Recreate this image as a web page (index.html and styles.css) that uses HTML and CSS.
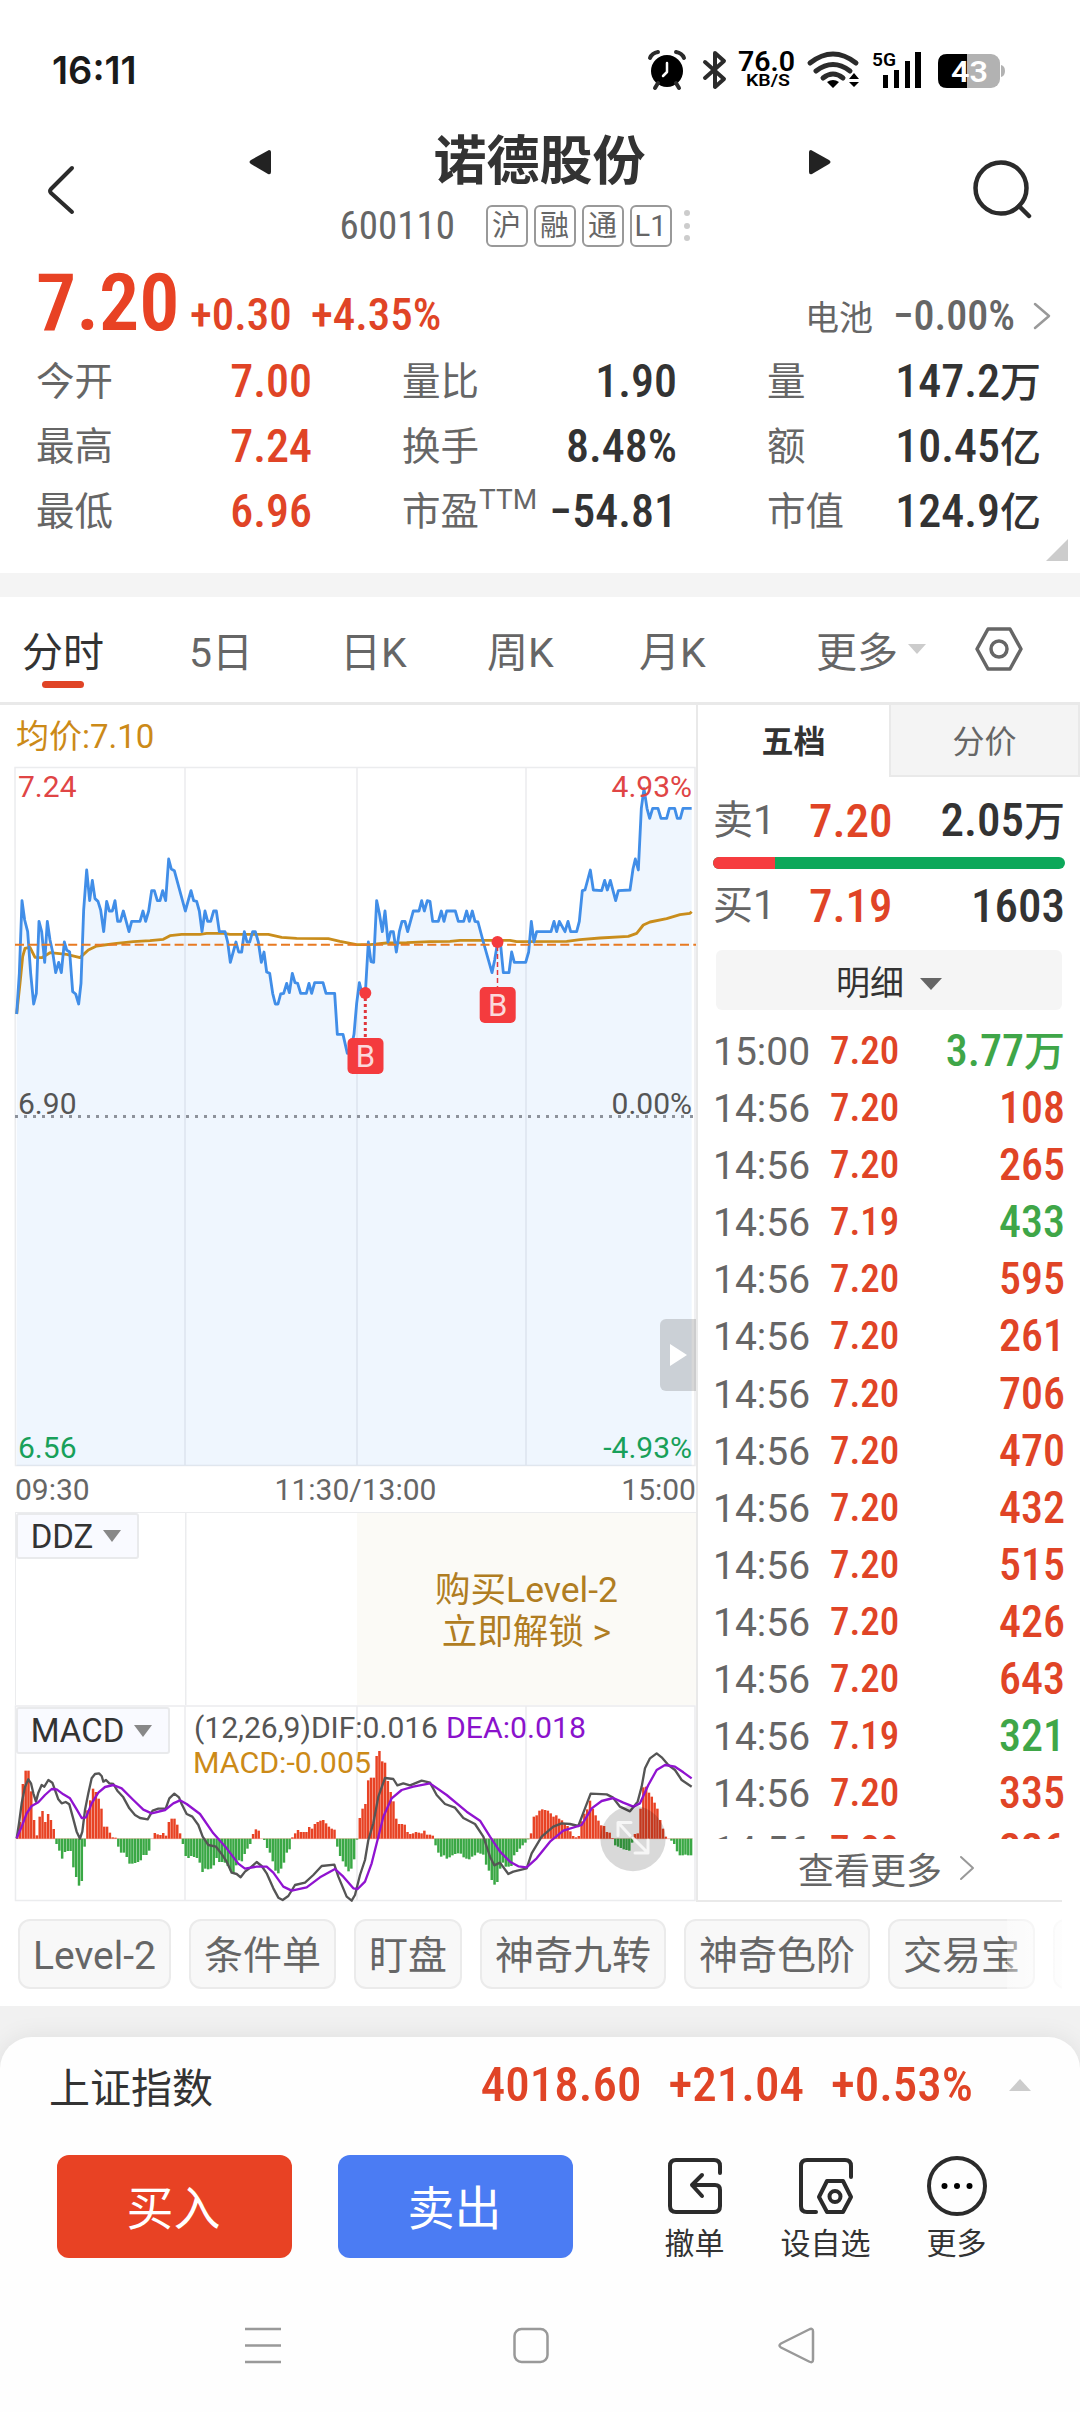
FILE: index.html
```html
<!DOCTYPE html>
<html lang="zh-CN">
<head>
    <meta charset="UTF-8">
    <meta name="viewport" content="width=device-width, initial-scale=1.0">
    <title>诺德股份 600110</title>
    <link rel="stylesheet" href="styles.css">
</head>
<body>
    <div class="status-bar">
        <span class="clock">16:11</span>
        <svg class="status-icons" viewBox="640 40 370 60" width="370" height="60">
            <!-- alarm -->
            <circle cx="667" cy="71" r="16"/>
            <path d="M650 58q2-5 8-6M684 58q-2-5-8-6M658 83l-3 5M676 83l3 5" class="ln" stroke-width="4"/>
            <path d="M667 63v9l-4 4" class="ln-white" stroke-width="2.5"/>
            <!-- bluetooth -->
            <path d="M705 62l19 17-9 8V53l9 8-19 17" class="ln" stroke-width="4"/>
            <text x="738" y="71" class="speed" textLength="57" lengthAdjust="spacingAndGlyphs">76.0</text>
            <text x="746" y="86" class="unit" textLength="44" lengthAdjust="spacingAndGlyphs">KB/S</text>
            <!-- wifi -->
            <path d="M810 63q23-18 46 0M816 71q17-13 34 0M823 78q10-8 20 0" class="ln" stroke-width="5"/>
            <path d="M827 82q6-4 12 0l-6 6zM849 79l5-6 5 6zM849 82h10l-5 5z"/>
            <text x="872" y="66" class="net" textLength="24" lengthAdjust="spacingAndGlyphs">5G</text>
            <path d="M883 75h5v13h-5zM894 70h5v18h-5zM905 61h5v27h-5zM915 52h6v36h-6z"/>
            <!-- battery -->
            <rect x="938" y="54" width="62" height="34" rx="9" fill="#b2b2b2"/>
            <path d="M1001 65q4 1 4 6t-4 6z" fill="#b2b2b2"/>
            <path d="M947 54h20v34h-20q-9 0-9-9v-16q0-9 9-9z" fill="#000"/>
            <text x="951" y="82" class="level" textLength="37" lengthAdjust="spacingAndGlyphs">43</text>
        </svg>
    </div>

    <header class="header">
        <svg class="back" viewBox="0 0 30 50" width="30" height="50"><path d="M25 3L4 24q-2 2 0 4l21 19" class="ln" stroke-width="4"/></svg>
        <div class="stock">
            <div class="stock-name">
                <svg viewBox="0 0 22 26" width="22" height="26"><path d="M20 1q2 0 2 2v20q0 3-3 2L2 15q-3-2 0-4z"/></svg>
                <h1>诺德股份</h1>
                <svg viewBox="0 0 22 26" width="22" height="26"><path d="M2 1q-2 0-2 2v20q0 3 3 2L20 15q3-2 0-4z"/></svg>
            </div>
            <div class="stock-code">
                <span class="num code">600110</span>
                <span class="badge">沪</span><span class="badge">融</span><span class="badge">通</span><span class="badge">L1</span>
                <svg viewBox="0 0 6 32" width="6" height="32" fill="#ccc"><circle cx="3" cy="3" r="3"/><circle cx="3" cy="16" r="3"/><circle cx="3" cy="28" r="3"/></svg>
            </div>
        </div>
        <svg class="search" viewBox="0 0 60 60" width="60" height="60"><circle cx="28" cy="29" r="25.5" class="ln" stroke-width="4.5"/><path d="M46 47l10 10" class="ln" stroke-width="4.5"/></svg>
    </header>

    <section class="quote">
        <div class="price-row">
            <span class="num price">7.20</span>
            <span class="num change">+0.30</span>
            <span class="num change">+4.35%</span>
            <span class="sector">电池</span>
            <span class="num sector-change">−0.00%</span>
            <svg viewBox="0 0 18 28" width="18" height="28"><path d="M2 2l14 12L2 26" class="ln-gray" stroke-width="2.5"/></svg>
        </div>
        <div class="stats">
            <div class="stat"><span>今开</span><b class="num red">7.00</b></div>
            <div class="stat"><span>量比</span><b class="num">1.90</b></div>
            <div class="stat"><span>量</span><b class="num">147.2<em>万</em></b></div>
            <div class="stat"><span>最高</span><b class="num red">7.24</b></div>
            <div class="stat"><span>换手</span><b class="num">8.48%</b></div>
            <div class="stat"><span>额</span><b class="num">10.45<em>亿</em></b></div>
            <div class="stat"><span>最低</span><b class="num red">6.96</b></div>
            <div class="stat"><span>市盈<i>TTM</i></span><b class="num">−54.81</b></div>
            <div class="stat"><span>市值</span><b class="num">124.9<em>亿</em></b></div>
        </div>
        <div class="corner"></div>
    </section>

    <nav class="tabs">
        <span class="tab active">分时</span>
        <span class="tab">5日</span>
        <span class="tab">日K</span>
        <span class="tab">周K</span>
        <span class="tab">月K</span>
        <span class="tab more">更多<svg viewBox="0 0 18 10" width="18" height="10"><path d="M0 0h18l-9 10z" fill="#ccc"/></svg></span>
        <svg viewBox="0 0 48 44" width="48" height="44"><path d="M13 2h22l11 20-11 20H13L2 22z" class="ln-dark" stroke-width="3.5"/><circle cx="24" cy="22" r="8" class="ln-dark" stroke-width="3.5"/></svg>
    </nav>

    <main class="board">
        <div class="charts">
            <div class="average">均价:7.10</div>
            <svg class="price-chart" viewBox="0 766 696 701" width="696" height="701">
                <g class="grid">
                    <path d="M185 767v699M357 767v699M526 767v699"/>
                    <path d="M15 767.5h680v698H15.5z" stroke-width="2"/>
                </g>
                <g transform="translate(0 760) scale(.33333)">
                    <path class="area" id="area"/>
                    <path class="avg-line" d="M50 762L60 670L68 590L75 565L90 562L105 592L125 593L150 578L200 583L240 593L265 570L290 558L350 550L400 545L450 542L490 538L510 527L545 523L600 523L620 520L670 520L690 523L805 523L845 532L890 535L985 536L1020 544L1070 554L1110 554L1160 549L1220 548L1290 545L1350 544L1380 541L1530 541L1550 545L1700 544L1740 539L1800 534L1885 529L1910 520L1930 495L1950 486L2000 476L2040 464L2070 460L2075 455"/>
                    <path class="price-line" id="price"/>
                </g>
                <path d="M15 944.7h681" stroke="#e87a22" stroke-width="2" stroke-dasharray="9 4.3" fill="none"/>
                <path d="M15 1116.5h680" stroke="#8d929b" stroke-width="3" stroke-dasharray="3 6" fill="none"/>
                <g class="axis">
                    <text x="18" y="797" fill="#e04545">7.24</text>
                    <text x="692" y="797" fill="#e04545" text-anchor="end">4.93%</text>
                    <text x="18" y="1114" fill="#555">6.90</text>
                    <text x="692" y="1114" fill="#555" text-anchor="end">0.00%</text>
                    <text x="18" y="1458" fill="#18a05a">6.56</text>
                    <text x="692" y="1458" fill="#18a05a" text-anchor="end">-4.93%</text>
                </g>
                <g class="mark">
                    <path d="M365.3 998v40" stroke-width="3" stroke-dasharray="3 3"/>
                    <path d="M497.5 946v42" stroke-width="1.5" stroke-dasharray="5 3"/>
                    <circle cx="365.3" cy="993" r="6"/><circle cx="497.5" cy="942" r="6"/>
                    <rect x="347.5" y="1038" width="36" height="36" rx="5"/><rect x="479.7" y="987" width="36" height="36" rx="5"/>
                    <text x="365.5" y="1067">B</text><text x="497.7" y="1016">B</text>
                </g>
            </svg>
            <div class="times"><span>09:30</span><span>11:30/13:00</span><span>15:00</span></div>
            <div class="ddz">
                <span class="indicator">DDZ<i></i></span>
                <div class="unlock">购买Level-2<br>立即解锁 &gt;</div>
            </div>
            <div class="macd">
                <svg viewBox="0 1705 696 198" width="696" height="198">
                    <g class="grid">
                        <path d="M185 1706v194M357 1706v194M526 1706v194"/>
                        <path d="M15.5 1706h679.500v194.500H15.500z" stroke-width="2"/>
                    </g>
                    <g transform="translate(0 1690) scale(.33333)">
                        <path d="M50 446H2078" stroke="#e8a090" stroke-width="2"/>
                        <g id="bars"></g>
                        <path class="dif" d="M50 445L57 400L65 340L75 290L85 268L93 280L100 310L108 335L115 308L125 285L133 290L145 270L157 278L165 300L175 328L185 340L197 336L208 343L218 380L230 425L240 446L247 425L255 360L265 310L275 265L285 252L297 250L305 258L310 275L318 270L328 280L340 282L352 302L370 322L388 355L405 375L420 384L443 388L458 362L475 356L497 356L508 325L523 311L537 322L545 342L560 372L577 380L595 405L608 440L625 465L648 470L665 492L680 515L695 548L710 552L722 562L735 545L752 532L770 516L785 528L800 550L820 595L835 623L848 630L865 618L885 585L915 578L940 555L965 528L1003 524L1015 560L1040 620L1055 632L1065 615L1080 555L1095 510L1105 450L1120 400L1135 320L1155 264L1180 267L1192 286L1210 280L1230 286L1265 272L1290 278L1310 315L1335 342L1365 353L1390 384L1425 402L1450 440L1470 500L1483 526L1500 518L1525 552L1540 545L1580 535L1595 490L1625 440L1660 410L1685 400L1710 402L1735 408L1755 355L1772 311L1820 313L1838 322L1860 350L1890 364L1913 335L1925 290L1935 235L1950 205L1970 190L1985 202L2005 225L2025 240L2045 270L2075 290"/>
                        <path class="dea" d="M50 445L65 410L80 370L95 348L115 337L135 315L155 297L170 298L190 313L210 325L230 358L245 384L258 382L275 340L295 308L315 291L340 285L365 295L400 330L430 359L455 370L495 360L520 340L540 331L560 342L600 372L640 430L680 475L715 521L735 536L770 530L800 530L820 548L850 590L875 602L920 592L960 562L1005 537L1030 560L1060 595L1073 597L1095 575L1115 520L1135 440L1150 380L1175 325L1205 300L1240 290L1290 280L1340 315L1400 365L1440 392L1470 440L1500 485L1530 515L1555 529L1580 532L1610 505L1650 455L1690 422L1745 405L1775 355L1805 333L1840 324L1870 338L1900 350L1920 340L1945 285L1970 240L1995 225L2025 230L2050 247L2075 265"/>
                    </g>
                    <g class="axis">
                        <text x="194" y="1738" fill="#555" textLength="244" lengthAdjust="spacingAndGlyphs">(12,26,9)DIF:0.016</text>
                        <text x="446" y="1738" fill="#8a12cc" textLength="140" lengthAdjust="spacingAndGlyphs">DEA:0.018</text>
                        <text x="193" y="1773" fill="#cc8a18" textLength="178" lengthAdjust="spacingAndGlyphs">MACD:-0.005</text>
                    </g>
                    <circle cx="633" cy="1838.500" r="32.700" fill="#000" fill-opacity=".15"/>
                    <path d="M631 1822.500h-13v13M618 1822.500l12 13M635 1853h13v-13M648 1853l-15-15" class="ln-white" stroke-width="3" stroke-opacity=".75"/>
                </svg>
                <span class="indicator wide">MACD<i></i></span>
            </div>
            <div class="slide-handle"></div>
        </div>

        <aside class="orders">
            <div class="order-tabs"><span class="current">五档</span><span>分价</span></div>
            <div class="level1"><span>卖1</span><b class="num red">7.20</b><b class="num">2.05<em>万</em></b></div>
            <div class="ratio"><i style="width: 17.6%"></i></div>
            <div class="level1 buy"><span>买1</span><b class="num red">7.19</b><b class="num">1603</b></div>
            <div class="detail">明细<i></i></div>
            <div class="ticks" id="ticks"></div>
            <div class="see-more">查看更多<svg viewBox="0 0 16 26" width="16" height="26"><path d="M2 2l12 11L2 24" class="ln-gray" stroke-width="2"/></svg></div>
        </aside>
    </main>

    <div class="chips">
        <span>Level-2</span><span>条件单</span><span>盯盘</span><span>神奇九转</span><span>神奇色阶</span><span>交易宝</span><span></span>
    </div>

    <footer class="bottom">
        <div class="sheet">
            <div class="index">
                <span class="index-name">上证指数</span>
                <span class="num">4018.60</span>
                <span class="num">+21.04</span>
                <span class="num">+0.53%</span>
                <i></i>
            </div>
            <div class="actions">
                <button class="buy-btn">买入</button>
                <button class="sell-btn">卖出</button>
                <div class="action">
                    <svg viewBox="0 0 60 60" width="60" height="60"><path d="M55 17V10q0-6-6-6H11Q5 4 5 10v40q0 6 6 6h38q6 0 6-6V34q0-5-5-5H27M37 19L27 29l10 11" class="ln" stroke-width="4"/></svg>
                    撤单
                </div>
                <div class="action">
                    <svg viewBox="0 0 60 60" width="60" height="60"><path d="M55 21V10q0-6-6-6H11Q5 4 5 10v40q0 6 6 6h9M31 25h16l8 16-8 15H31l-8-15z" class="ln" stroke-width="4"/><circle cx="39" cy="40.500" r="5.500" class="ln" stroke-width="4"/></svg>
                    设自选
                </div>
                <div class="action">
                    <svg viewBox="0 0 60 60" width="60" height="60"><circle cx="30" cy="30" r="28" class="ln" stroke-width="4"/><circle cx="17.500" cy="30" r="3"/><circle cx="30" cy="30" r="3"/><circle cx="42.500" cy="30" r="3"/></svg>
                    更多
                </div>
            </div>
            <svg class="sys-nav" viewBox="0 0 1080 40" width="1080" height="40">
                <path d="M245 4h36M245 20.500h36M245 37h36"/>
                <rect x="514.500" y="4" width="33" height="33" rx="7"/>
                <path d="M781 18.500L809 4.500q4-2 4 2v28q0 4-4 2L781 22.500q-3-2 0-4z"/>
            </svg>
        </div>
    </footer>
    <script src="script.js"></script>
</body>
</html>
```
FILE: styles.css
```css
* {
    box-sizing: border-box;
}
body {
    margin: 0;
    width: 1080px;
    height: 2412px;
    overflow: hidden;
    background-color: #fff;
    color: #333;
    font-family: Roboto, "Noto Sans CJK SC", sans-serif;
}
svg {
    display: block;
    flex: none;
}
i, em {
    font-style: normal;
}
.ln, .ln-white, .ln-gray, .ln-dark {
    fill: none;
    stroke: #2b2b2b;
    stroke-linecap: round;
    stroke-linejoin: round;
}
.ln-white {
    stroke: #fff;
}
.ln-gray {
    stroke: #999;
}
.ln-dark {
    stroke: #666;
}
.num {
    font-stretch: 80%;
    font-weight: 550;
}
.num em {
    font-size: 41px;
    font-weight: 500;
}
.red {
    color: #e04426;
}

/* status bar */
.status-bar {
    display: flex;
    justify-content: space-between;
    height: 100px;
    padding: 40px 70px 0 52px;
}
.clock {
    font: 600 38px/60px Inter, sans-serif;
    color: #1a1a1a;
}
.status-icons text {
    font-family: Roboto, sans-serif;
    font-weight: 600;
}
.status-icons .speed {
    font-size: 27px;
}
.status-icons .unit {
    font-size: 16px;
}
.status-icons .net {
    font-size: 19px;
}
.status-icons .level {
    font-size: 30px;
    fill: #fff;
}

/* header */
.header {
    display: flex;
    height: 160px;
    padding: 0 47px;
    justify-content: space-between;
}
.back {
    margin-top: 65px;
}
.search {
    margin-top: 59px;
}
.stock {
    width: 582px;
    margin-left: 29px;
}
.stock-name {
    display: flex;
    align-items: center;
    justify-content: space-between;
    height: 100px;
    padding-top: 23px;
}
.stock-name svg {
    fill: #222;
}
h1 {
    margin: 0;
    font-size: 53px;
    line-height: 76px;
    font-weight: 700;
}
.stock-code {
    display: flex;
    align-items: center;
    gap: 6px;
    padding-left: 91px;
    height: 52px;
    color: #666;
}
.stock-code .code {
    width: 140px;
    font-size: 39px;
    font-weight: 400;
    font-stretch: 85%;
}
.badge {
    width: 42px;
    height: 42px;
    border: 2px solid #999;
    border-radius: 6px;
    font-size: 29px;
    line-height: 38px;
    text-align: center;
}
.stock-code svg {
    margin-left: 6px;
}

/* quote */
.quote {
    position: relative;
    height: 337px;
    padding: 0 36px;
    border-bottom: 24px solid #f4f4f4;
}
.price-row {
    display: flex;
    align-items: baseline;
    height: 89px;
    line-height: 86px;
}
.price {
    width: 154px;
    font-size: 80px;
    font-stretch: 75%;
    font-weight: 600;
    color: #e84224;
}
.change {
    width: 121px;
    font-size: 45px;
    font-weight: 500;
    color: #e04426;
}
.sector {
    margin-left: auto;
    font-size: 34px;
    color: #666;
}
.sector-change {
    margin: 0 18px 0 20px;
    font-size: 42px;
    font-weight: 500;
    color: #666;
}
.price-row svg {
    margin-right: -7px;
}
.stats {
    display: grid;
    grid-template-columns: 276px 275px 274px;
    column-gap: 90px;
    grid-auto-rows: 65px;
}
.stat {
    display: flex;
    justify-content: space-between;
    font-size: 38.5px;
    line-height: 65px;
    color: #666;
    white-space: nowrap;
}
.stat .num {
    font-size: 46px;
    color: #333;
}
.stat .red {
    color: #e04426;
}
.stat i {
    font-size: 28px;
    position: relative;
    top: -16px;
}
.corner {
    position: absolute;
    right: 12px;
    bottom: 12px;
    border-left: 22px solid transparent;
    border-bottom: 22px solid #ccc;
}

/* tabs */
.tabs {
    display: grid;
    grid-template-columns: 167px 151px 147px 152px 177px 159px 48px;
    align-items: center;
    height: 108px;
    padding: 0 0 2px 22px;
    border-bottom: 3px solid #e9e9e9;
    font-size: 41px;
    color: #666;
}
.tab {
    position: relative;
}
.active {
    color: #333;
}
.active::after {
    content: "";
    position: absolute;
    left: 20px;
    bottom: -9px;
    width: 42px;
    height: 7px;
    border-radius: 4px;
    background-color: #e04426;
}
.more {
    display: flex;
    align-items: center;
    gap: 10px;
}

/* charts */
.board {
    display: flex;
    height: 1197px;
}
.charts {
    position: relative;
    width: 698px;
    border-right: 2px solid #e9e9e9;
}
.average {
    height: 61px;
    padding-left: 16px;
    font-size: 33px;
    line-height: 63px;
    color: #cc8a18;
}
.grid path {
    fill: none;
    stroke: #ebecee;
    stroke-width: 1.5;
}
.area {
    fill: #2f86ee;
    fill-opacity: .08;
}
.price-line, .avg-line, .dif, .dea {
    fill: none;
    stroke: #418ee8;
    stroke-width: 8.5;
    stroke-linejoin: round;
}
.avg-line {
    stroke: #c98d1c;
}
.dif {
    stroke: #555;
    stroke-width: 7;
}
.dea {
    stroke: #9013d0;
    stroke-width: 7;
}
.axis text {
    font-size: 30px;
}
.mark {
    fill: #f43b3e;
}
.mark path {
    stroke: #e0363c;
}
.mark text {
    fill: #fbd9dc;
    font-size: 31px;
    text-anchor: middle;
}
.times {
    display: flex;
    justify-content: space-between;
    height: 45px;
    padding-left: 15px;
    font-size: 30px;
    line-height: 46px;
    color: #666;
}
.ddz {
    display: flex;
    justify-content: space-between;
    height: 193px;
    margin-left: 15px;
    border: 2px solid #ebecee;
    border-width: 1px 0 0 1px;
    background: linear-gradient(#ebecee, #ebecee) 169px 0 / 1.5px 100% no-repeat;
}
.unlock {
    width: 339px;
    padding-top: 56px;
    text-align: center;
    font-size: 35.5px;
    line-height: 42px;
    color: #b07d22;
    background-color: #fbfaf6;
}
.indicator {
    display: flex;
    align-items: center;
    justify-content: center;
    gap: 10px;
    width: 123px;
    height: 46px;
    border: 2px solid #e9eaec;
    border-radius: 3px;
    background-color: #f9faff;
    font-size: 33px;
    padding-right: 3px;
}
.indicator i {
    border: 9px solid transparent;
    border-top: 12px solid #888;
    border-bottom: 0;
}
.macd {
    position: relative;
}
.wide {
    position: absolute;
    left: 16px;
    top: 2px;
    width: 154px;
    height: 47px;
}
.slide-handle {
    position: absolute;
    right: 0;
    top: 614px;
    width: 36px;
    height: 72px;
    border-radius: 6px 0 0 6px;
    background-color: rgba(110, 110, 110, .28);
}
.slide-handle::after {
    content: "";
    position: absolute;
    left: 10px;
    top: 25px;
    border: 11px solid transparent;
    border-left: 17px solid #fff;
    border-right: 0;
}

/* orders */
.orders {
    width: 364px;
    padding-left: 15px;
    border-bottom: 2px solid #e9e9e9;
}
.order-tabs {
    display: flex;
    width: 382px;
    margin-left: -15px;
    font-size: 32px;
    line-height: 74px;
    text-align: center;
    color: #666;
}
.order-tabs span {
    width: 191px;
    height: 72px;
    border: 2px solid #e9e9e9;
    border-top: 0;
    background-color: #f4f4f4;
}
.order-tabs .current {
    border: 0;
    background-color: #fff;
    font-weight: 700;
    color: #333;
}
.level1 {
    display: grid;
    grid-template-columns: 96px 90px 1fr;
    height: 80px;
    width: 352px;
    align-items: center;
    padding-top: 8px;
    font-size: 40px;
    line-height: 60px;
    color: #666;
    white-space: nowrap;
}
.level1 .num {
    font-size: 47px;
    color: #333;
}
.level1 .num:last-child {
    text-align: right;
}
.level1 .red {
    color: #e04426;
}
.buy {
    height: 81px;
    padding: 0 0 8px;
}
.ratio {
    width: 352px;
    height: 12px;
    border-radius: 6px;
    background-color: #0ca85a;
    overflow: hidden;
}
.ratio i {
    display: block;
    height: 12px;
    background-color: #f63c3f;
}
.detail {
    display: flex;
    align-items: center;
    justify-content: center;
    gap: 16px;
    width: 346px;
    height: 60px;
    margin-left: 3px;
    border-radius: 6px;
    background-color: #f5f5f5;
    font-size: 34px;
}
.detail i {
    margin-top: 8px;
    border: 11px solid transparent;
    border-top: 12px solid #666;
    border-bottom: 0;
}
.ticks {
    width: 360px;
    height: 829px;
    padding-top: 12px;
    overflow: hidden;
}
.tick {
    display: grid;
    grid-template-columns: 117px 90px 1fr;
    align-items: center;
    width: 352px;
    height: 57.1px;
    line-height: 56px;
    font-size: 39px;
    color: #666;
    white-space: nowrap;
}
.tick span {
    padding-top: 2px;
}
.tick .num {
    font-size: 39px;
    color: #e04426;
}
.tick .vol {
    font-size: 44px;
    text-align: right;
}
.tick .sell {
    color: #3fa648;
}
.see-more {
    display: flex;
    align-items: center;
    justify-content: center;
    gap: 17px;
    height: 58px;
    font-size: 36px;
    color: #666;
    padding-right: 2px;
}

/* chips */
.chips {
    position: relative;
    display: flex;
    gap: 18px;
    width: 1062px;
    height: 104px;
    padding: 17px 0 0 18px;
    overflow: hidden;
}
.chips span {
    flex: none;
    height: 70px;
    padding: 0 13px;
    border: 2px solid #ebebeb;
    border-radius: 12px;
    background-color: #f8f8f8;
    font-size: 39px;
    line-height: 70px;
    color: #666;
}
.chips span:last-of-type {
    width: 140px;
}
.chips::after {
    content: "";
    position: absolute;
    right: 0;
    top: 0;
    width: 55px;
    height: 100%;
    background: linear-gradient(90deg, rgba(255, 255, 255, .35), rgba(255, 255, 255, .8));
}

/* bottom sheet */
.bottom {
    padding-top: 31px;
    background-color: #f1f1f1;
}
.sheet {
    height: 375px;
    border-radius: 32px 32px 0 0;
    background-color: #fefefe;
    box-shadow: 0 0 24px rgba(0, 0, 0, .08);
}
.index {
    display: flex;
    align-items: center;
    height: 95px;
    padding: 0 49px;
    font-size: 41px;
}
.index-name {
    margin-right: auto;
}
.index .num {
    margin-left: 27px;
    font-size: 49px;
    font-weight: 500;
    font-stretch: 77%;
    color: #e04426;
}
.index i {
    margin-left: 36px;
    border: 11px solid transparent;
    border-bottom: 12px solid #ccc;
    border-top: 0;
}
.actions {
    display: flex;
    padding: 23px 0 0 57px;
}
button {
    width: 235px;
    height: 103px;
    margin-right: 46px;
    padding: 0 2px 4px 0;
    border: 0;
    border-radius: 12px;
    font: 47px Roboto, "Noto Sans CJK SC", sans-serif;
    color: #fff;
}
.buy-btn {
    background-color: #e84224;
}
.sell-btn {
    background-color: #4b7cf3;
}
.action {
    display: flex;
    flex-direction: column;
    align-items: center;
    width: 131px;
    font-size: 30px;
    line-height: 56px;
}
.actions .sell-btn {
    margin-right: 56px;
}
.action svg {
    margin-top: 1px;
}
.sys-nav {
    margin-top: 53px;
    fill: none;
    stroke: #999;
    stroke-width: 2.5;
}
```
FILE: script.js
```js
// intraday price, points as x,y at 3 units per pixel
const price = '50,762 58,640 66,422 74,480 83,515 92,640 101,732 109,700 117,484 125,515 134,607 142,484 150,540 158,576 167,638 176,607 184,638 193,546 200,570 209,576 218,695 227,702 236,732 243,670 251,450 260,330 269,422 277,361 285,416 294,424 302,450 311,515 320,424 328,453 337,453 345,422 353,484 361,484 370,453 387,515 395,484 420,484 429,453 437,484 446,453 455,392 463,392 472,422 480,422 488,392 497,422 506,297 514,327 523,332 556,453 573,392 581,422 590,424 598,453 606,515 615,453 623,484 632,484 641,453 649,453 658,515 675,515 683,546 691,607 708,546 716,576 725,576 733,515 741,546 749,546 758,515 766,515 775,546 784,607 792,576 800,636 809,640 818,700 826,732 834,732 842,702 851,700 860,670 868,698 877,640 885,668 893,670 902,700 919,700 927,670 935,700 944,668 969,668 978,700 1004,700 1012,823 1029,823 1042,880 1050,880 1062,823 1070,730 1078,668 1086,700 1096,700 1105,546 1113,605 1121,607 1130,422 1138,460 1147,515 1155,453 1164,546 1172,515 1180,515 1189,576 1198,515 1206,484 1215,484 1223,515 1240,453 1257,453 1265,422 1273,453 1282,422 1290,424 1298,484 1315,484 1324,453 1332,484 1340,453 1366,453 1375,484 1391,484 1400,453 1408,484 1417,453 1425,484 1434,486 1450,546 1476,638 1484,600 1493,546 1501,546 1510,638 1527,638 1535,576 1543,607 1577,607 1586,576 1594,484 1602,546 1610,515 1653,515 1662,484 1670,515 1678,484 1695,515 1704,484 1712,515 1730,515 1738,484 1747,392 1755,390 1771,330 1780,390 1805,392 1814,361 1822,390 1831,361 1847,422 1855,392 1890,390 1899,327 1906,297 1915,330 1924,145 1932,86 1941,145 1949,175 1958,145 1974,145 1983,175 2000,175 2008,145 2024,145 2032,175 2041,175 2049,145 2075,145';
document.getElementById('price').setAttribute('d', 'M' + price.replaceAll(' ', 'L'));
document.getElementById('area').setAttribute('d', 'M' + price.replaceAll(' ', 'L') + 'V2117H50Z');

const macd = [10, 50, 164, 204, 204, 142, 56, 10, 66, 83, 50, 74, 56, 29, -16, -36, -60, -40, -37, -37, -86, -115, -141, -127, -24, 85, 115, 150, 140, 120, 90, 36, 36, 18, 4, 3, -24, -42, -42, -55, -75, -75, -73, -70, -65, -49, -49, -36, 0, 17, 13, 11, 17, 9, 50, 60, 60, 42, 16, -16, -52, -58, -52, -55, -58, -72, -100, -90, -92, -90, -80, -58, -70, -70, -72, -82, -95, -105, -80, -65, -68, -46, -30, -16, 14, 28, 24, 0, -4, -28, -42, -68, -96, -104, -90, -72, -42, -32, 4, 16, 26, 20, 20, 20, 35, 30, 44, 50, 54, 56, 46, 36, 30, 27, -24, -52, -68, -84, -98, -90, -62, -3, 62, 90, 104, 175, 183, 183, 248, 263, 232, 228, 173, 140, 112, 60, 44, 44, 42, 20, 14, 16, 20, 18, 16, 24, 12, 12, 9, -20, -42, -54, -50, -60, -56, -50, -46, -44, -45, -56, -60, -62, -54, -50, -42, -45, -48, -78, -96, -124, -138, -130, -90, -72, -84, -84, -82, -50, -40, -30, -20, -12, -2, 16, 66, 70, 84, 88, 86, 84, 76, 66, 70, 60, 55, 45, 38, 22, 8, 4, 8, 52, 75, 88, 114, 90, 70, 54, 40, 38, 20, 18, 2, -20, -24, -28, -32, -34, -36, -12, 14, 16, 90, 154, 156, 138, 126, 108, 90, 56, 30, 6, 0, -6, -16, -38, -50, -50, -48, -50, -50];
const step = 2030 / macd.length;
document.getElementById('bars').innerHTML = macd.map((v, i) =>
    `<rect x="${48 + i * step}" y="${v > 0 ? 446 - v : 446}" width="${step - 1}" height="${Math.abs(v)}" fill="${v > 0 ? '#e84224' : '#3aa845'}"/>`
).join('');

// time, price, volume, sell flag
const ticks = [
    ['15:00', '7.20', '3.77<em>万</em>', 1],
    ['14:56', '7.20', '108'],
    ['14:56', '7.20', '265'],
    ['14:56', '7.19', '433', 1],
    ['14:56', '7.20', '595'],
    ['14:56', '7.20', '261'],
    ['14:56', '7.20', '706'],
    ['14:56', '7.20', '470'],
    ['14:56', '7.20', '432'],
    ['14:56', '7.20', '515'],
    ['14:56', '7.20', '426'],
    ['14:56', '7.20', '643'],
    ['14:56', '7.19', '321', 1],
    ['14:56', '7.20', '335'],
    ['14:56', '7.20', '226']
];
document.getElementById('ticks').innerHTML = ticks.map(t =>
    `<div class="tick"><span>${t[0]}</span><b class="num">${t[1]}</b><b class="num vol ${t[3] ? 'sell' : ''}">${t[2]}</b></div>`
).join('');
```
